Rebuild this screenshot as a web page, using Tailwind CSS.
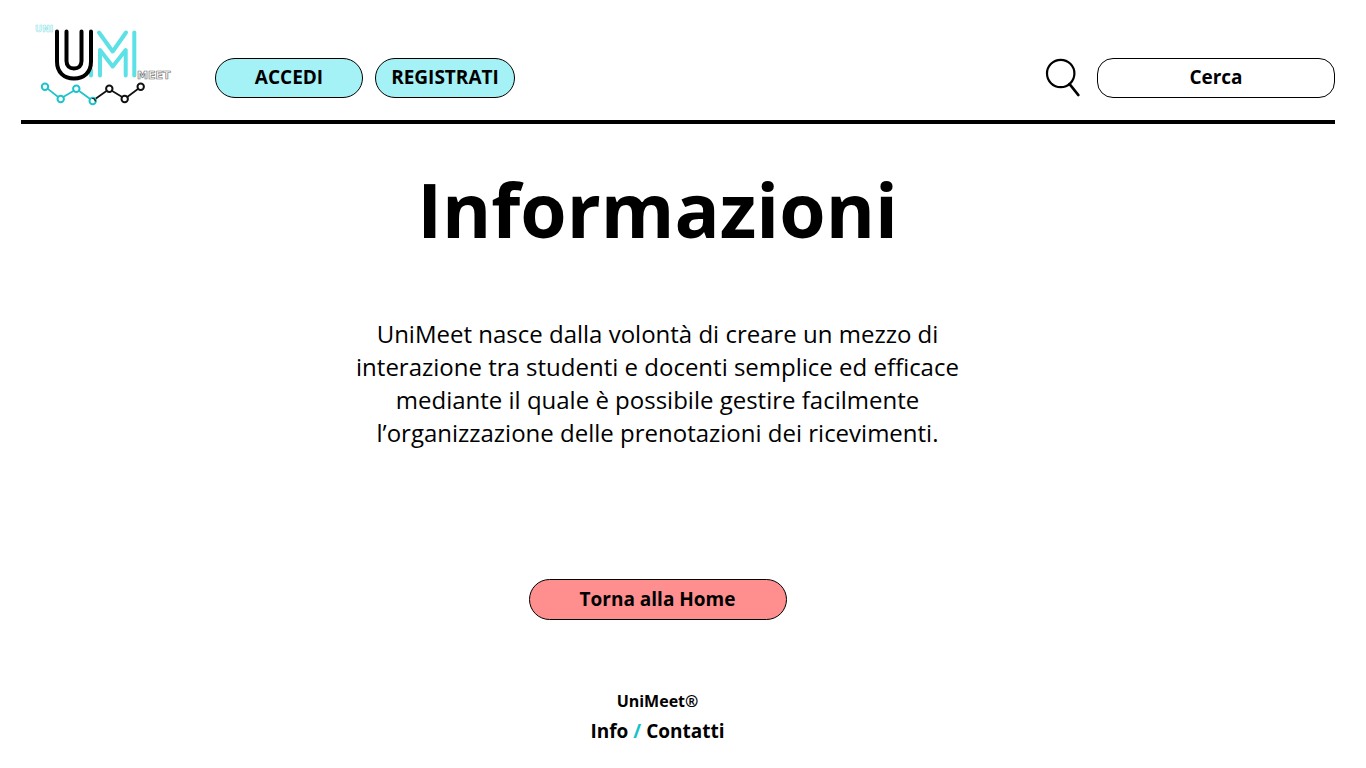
<!DOCTYPE html>
<html lang="it">
<head>
<meta charset="utf-8">
<meta name="viewport" content="width=device-width, initial-scale=1">
<title>UniMeet - Informazioni</title>
<script src="https://cdn.jsdelivr.net/npm/@tailwindcss/browser@4"></script>
</head>
<body class="flex min-h-screen flex-col bg-white font-['Open_Sans',sans-serif] text-black">
  <header class="mr-[31px] ml-[21px] flex items-end border-b-4 border-black pt-5 pb-[22px]">
    <a href="#" aria-label="UniMeet" class="-mb-3 ml-3 shrink-0">
      <svg class="block h-[90px] w-[142px]" viewBox="33 20 142 90" fill="none" stroke-linecap="round" stroke-linejoin="round">
        <text opacity=".9" x="35" y="32" font-family="DejaVu Sans" font-weight="bold" font-size="9" fill="#fff" stroke="#7fdfe6" stroke-width=".6">UNI</text>
        <g stroke="#5ce1e6" stroke-width="4">
          <path d="M91 70V75.500"/>
          <path d="M99 32.500L112.700 51.500L126 32.500"/>
          <path d="M100 75.500V50L112.700 66.500L125.700 50V75.500"/>
          <path d="M134.300 32.500V75.500"/>
        </g>
        <g stroke="#000" stroke-width="4">
          <path d="M57 31.500V61.500C57 72.500 64 78.500 74 78.500S91 72.500 91 61.500V31.500"/>
          <path d="M66.500 31.500V61C66.500 66 69.500 68.500 74 68.500S81.500 66 81.500 61V31.500"/>
        </g>
        <text opacity=".9" x="137" y="79" font-family="DejaVu Sans" font-weight="bold" font-size="11" fill="#fff" stroke="#666" stroke-width=".7">MEET</text>
        <g stroke-width="1.700">
          <path stroke="#1fc3cb" d="M47.500 88.700L58.200 97M63.200 97L73.800 90.700M78.800 90.700L90.200 99"/>
          <path stroke="#111" d="M95.200 99L106.800 90.700M111.800 90.700L122.200 97M127.200 97L138.200 88.700"/>
          <g stroke="#1fc3cb" stroke-width="2">
            <circle cx="45" cy="86.700" r="3.200"/><circle cx="60.700" cy="99" r="3.200"/><circle cx="76.300" cy="88.700" r="3.200"/><circle cx="92.700" cy="101" r="3.200"/>
          </g>
          <path stroke="#111" stroke-width="1.200" d="M92.700 98.500A2.500 2.500 0 0 1 95.200 101"/>
          <g stroke="#111" stroke-width="2">
            <circle cx="109.300" cy="88.700" r="3.200"/><circle cx="124.700" cy="99" r="3.200"/><circle cx="140.700" cy="86.700" r="3.200"/>
          </g>
        </g>
      </svg>
    </a>
    <nav class="ml-10 flex gap-3" aria-label="Account">
      <button type="button" class="h-10 w-[148px] rounded-full border border-black bg-[#a4f1f6] pb-[2px] text-[19px] leading-6 font-bold">ACCEDI</button>
      <button type="button" class="h-10 w-[140px] rounded-full border border-black bg-[#a4f1f6] pb-[2px] text-[19px] leading-6 font-bold">REGISTRATI</button>
    </nav>
    <form class="ml-auto flex items-center gap-4" role="search">
      <label for="cerca" aria-label="Cerca">
        <svg class="block h-10 w-9" viewBox="1045 58 36 40" fill="none" stroke="#000" stroke-linecap="round">
          <circle cx="1060.700" cy="73.500" r="13.700" stroke-width="2.200"/>
          <path d="M1069.500 84L1078.300 95" stroke-width="2.800"/>
        </svg>
      </label>
      <input id="cerca" type="text" placeholder="Cerca" class="h-10 w-[238px] rounded-2xl border border-black bg-white px-4 pb-[2px] text-center text-[19px] leading-6 font-bold placeholder:text-black placeholder:opacity-100">
    </form>
  </header>
  <main class="mr-[51px] flex flex-col items-center text-center">
    <h1 class="mt-[31px] text-[75px] leading-[108px] font-bold">Informazioni</h1>
    <p class="mt-[54px] w-[620px] text-2xl leading-[33px]">UniMeet nasce dalla volontà di creare un mezzo di interazione tra studenti e docenti semplice ed efficace mediante il quale è possibile gestire facilmente l’organizzazione delle prenotazioni dei ricevimenti.</p>
    <button type="button" class="mt-[130px] h-[41px] w-[258px] rounded-full border border-black bg-[#ff8e8e] pb-[2px] text-[19px] leading-6 font-bold">Torna alla Home</button>
  </main>
  <footer class="mt-[69px] mr-[51px] flex flex-col items-center font-bold">
    <p class="text-base leading-6">UniMeet®</p>
    <p class="mt-1 text-[19px] leading-7"><a href="#">Info</a> <span class="text-[#14c3c9]">/</span> <a href="#">Contatti</a></p>
  </footer>
</body>
</html>
